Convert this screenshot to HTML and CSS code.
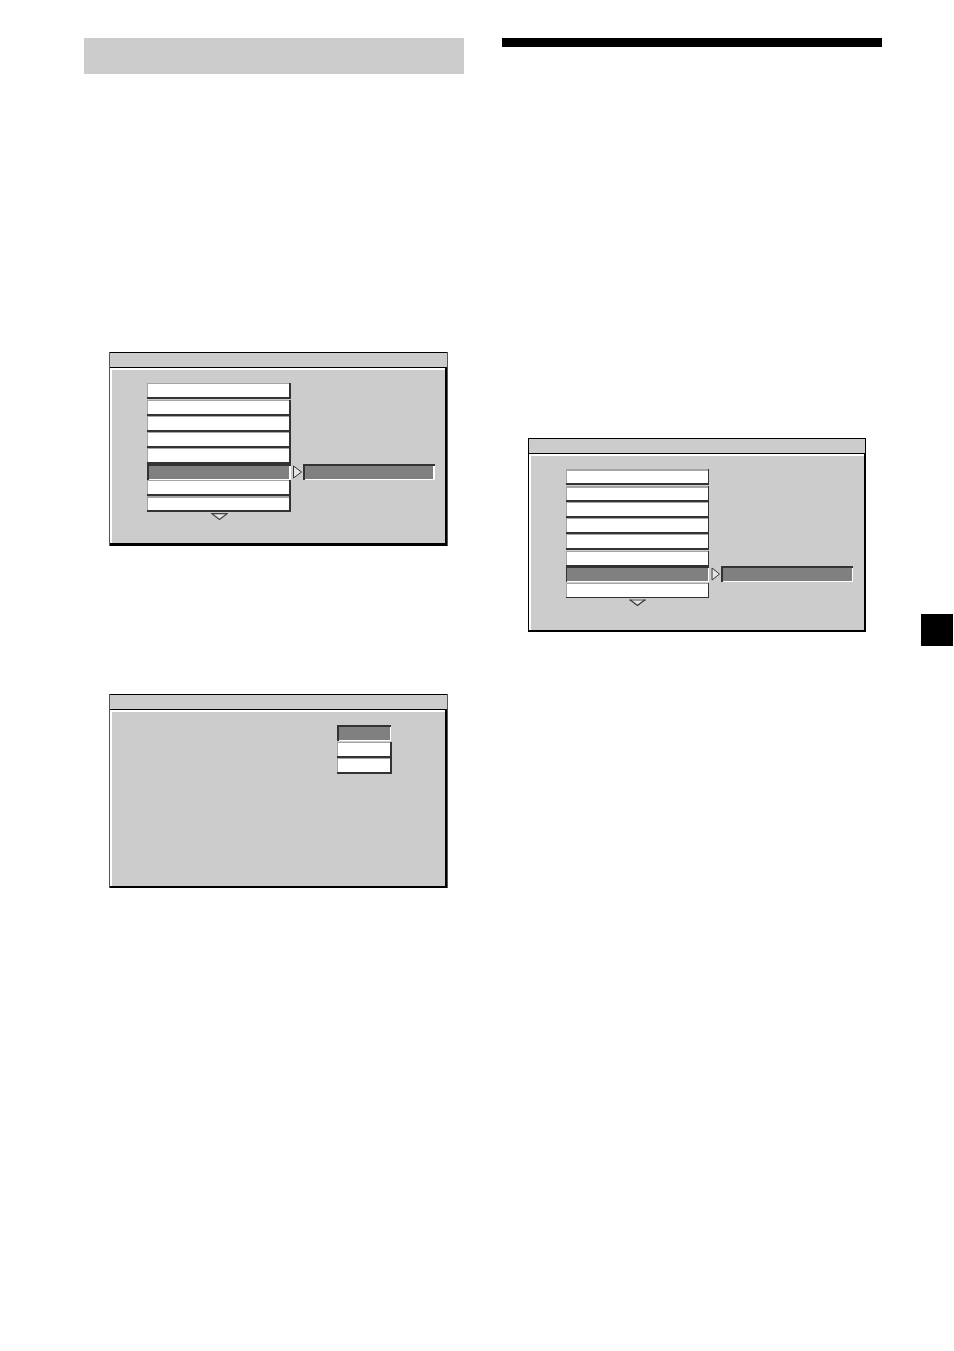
FILE: index.html
```
<!DOCTYPE html>
<html lang="en">
<head>
<meta charset="utf-8">
<meta name="viewport" content="width=device-width, initial-scale=1">
<link rel="stylesheet" href="styles.css">
</head>
<body>
<main class="page">
  <section class="column">
    <div class="heading-band"></div>
    <div class="panel panel-first">
      <div class="panel-title"></div>
      <div class="panel-body deep">
        <ul class="menu">
          <li class="row"><button type="button" class="item"></button></li>
          <li class="row spaced"><button type="button" class="item"></button></li>
          <li class="row"><button type="button" class="item"></button></li>
          <li class="row"><button type="button" class="item"></button></li>
          <li class="row"><button type="button" class="item"></button></li>
          <li class="row">
            <button type="button" class="item selected"></button>
            <svg class="arrow-right" viewBox="0 0 10 14"><path d="M.5 1v12L8.500 7z" fill="#e4e4e4" stroke="#333"/></svg>
            <button type="button" class="value"></button>
          </li>
          <li class="row"><button type="button" class="item"></button></li>
          <li class="row ridge-row"><button type="button" class="item ridge"></button></li>
        </ul>
        <svg class="arrow-down" viewBox="0 0 17 8"><path d="M1 .7h15L8.500 6.500z" fill="#e4e4e4" stroke="#444" stroke-width="1.200"/></svg>
      </div>
    </div>
    <div class="panel panel-second">
      <div class="panel-title"></div>
      <div class="panel-body">
        <ul class="menu choices">
          <li class="row"><button type="button" class="item selected"></button></li>
          <li class="row spaced"><button type="button" class="item"></button></li>
          <li class="row"><button type="button" class="item"></button></li>
        </ul>
      </div>
    </div>
  </section>
  <section class="column">
    <div class="heading-rule"></div>
    <div class="panel panel-third">
      <div class="panel-title"></div>
      <div class="panel-body">
        <ul class="menu">
          <li class="row"><button type="button" class="item ridge"></button></li>
          <li class="row spaced"><button type="button" class="item ridge"></button></li>
          <li class="row"><button type="button" class="item"></button></li>
          <li class="row"><button type="button" class="item"></button></li>
          <li class="row"><button type="button" class="item"></button></li>
          <li class="row spaced short"><button type="button" class="item thin"></button></li>
          <li class="row">
            <button type="button" class="item selected"></button>
            <svg class="arrow-right" viewBox="0 0 10 14"><path d="M1 1v12L8.500 7z" fill="#e4e4e4"/><path d="M1 1v12" stroke="#888" stroke-width="2"/><path d="M1 1l7.500 6L1 13" fill="none" stroke="#333"/></svg>
            <button type="button" class="value"></button>
          </li>
          <li class="row spaced short"><button type="button" class="item thin"></button></li>
        </ul>
        <svg class="arrow-down" viewBox="0 0 17 8"><path d="M1 .5h15L8.500 6.500z" fill="#e4e4e4"/><path d="M0 1h17" stroke="#999" stroke-width="2"/><path d="M1 .7l7.500 5.800L16 .7" fill="none" stroke="#333" stroke-width="1.200"/></svg>
      </div>
    </div>
  </section>
  <aside class="side-tab"></aside>
</main>
</body>
</html>
```
FILE: styles.css
```
* {
  box-sizing: border-box;
}

body {
  margin: 0;
  background: #fff;
  font-family: "Liberation Sans", Arial, sans-serif;
}

.page {
  display: grid;
  grid-template-columns: 84px 1fr 38px 1fr 72px;
  align-items: start;
  min-height: 100vh;
  padding-top: 38px;
}

.column {
  grid-column: 4;
}

.column:first-child {
  grid-column: 2;
}

.side-tab {
  grid-column: 5;
  justify-self: end;
  width: 32px;
  height: 32px;
  margin: 576px 1px 0 0;
  background: #000;
}

.heading-band {
  height: 36px;
  background: #ccc;
}

.heading-rule {
  height: 9px;
  background: #000;
}

.panel {
  --edge-right: 2px;
  --list-width: 144px;
  margin: 0 16px 0 25px;
  border: solid #555;
  border-width: 0 1px;
}

.panel-first {
  margin-top: 278px;
}

.panel-second {
  margin-top: 148px;
}

.panel-third {
  --edge-right: 1px;
  --list-width: 143px;
  margin-top: 391px;
  margin-left: 26px;
  border-color: #000;
}

.panel-title {
  height: 16px;
  border: solid #000;
  border-width: 1px 0;
  background: #ccc;
}

.panel-body {
  min-height: 178px;
  padding: 15px 12px 15px 37px;
  background: #ccc;
  box-shadow:
    inset 0 -2px #000,
    inset calc(0px - var(--edge-right)) 0 #000,
    inset 0 2px #fff,
    inset 2px 0 #fff;
}

.deep {
  box-shadow:
    inset 0 -3px #000,
    inset -2px 0 #000,
    inset 0 2px #fff,
    inset 2px 0 #fff;
}

.menu {
  margin: 0;
  padding: 0;
  list-style: none;
}

.row {
  display: flex;
  height: 16px;
}

.spaced {
  margin-top: 1px;
}

.short {
  height: 15px;
}

.item,
.value {
  height: 100%;
  padding: 0;
  border: 0;
  border-radius: 0;
}

.item {
  width: var(--list-width);
  background: #fff;
  box-shadow:
    inset 0 -2px #333,
    inset calc(0px - var(--edge-right)) 0 #333,
    inset 1px 0 #a5a5a5,
    inset 0 1px #a5a5a5;
}

.ridge {
  box-shadow:
    inset 0 -2px #333,
    inset calc(0px - var(--edge-right)) 0 #333,
    inset 1px 0 #a5a5a5,
    inset 0 2px #a5a5a5;
}

.thin {
  box-shadow:
    inset 0 -1px #333,
    inset -1px 0 #333,
    inset 1px 0 #a5a5a5,
    inset 0 1px #a5a5a5;
}

.selected,
.value {
  background: #808080;
  box-shadow:
    inset 0 2px #333,
    inset var(--edge-right) 0 #333,
    inset calc(0px - var(--edge-right)) 0 #fff,
    inset 0 -1px #fff;
}

.value {
  flex: 1;
}

.panel-third .value {
  box-shadow:
    inset 0 2px #333,
    inset 2px 0 #333,
    inset -1px 0 #fff,
    inset 0 -1px #fff;
}

.arrow-right {
  width: 10px;
  height: 14px;
  margin: 1px 0 0 2px;
}

.arrow-down {
  display: block;
  width: 17px;
  height: 8px;
  margin: 1px 0 0 63px;
}

.panel-first .arrow-down {
  margin-left: 64px;
}

.choices {
  --list-width: 55px;
  width: 55px;
  margin: 0 43px 0 auto;
}

.choices .selected {
  width: 54px;
  box-shadow:
    inset 0 2px #333,
    inset 2px 0 #333,
    inset -1px 0 #fff,
    inset 0 -1px #fff;
}
```
